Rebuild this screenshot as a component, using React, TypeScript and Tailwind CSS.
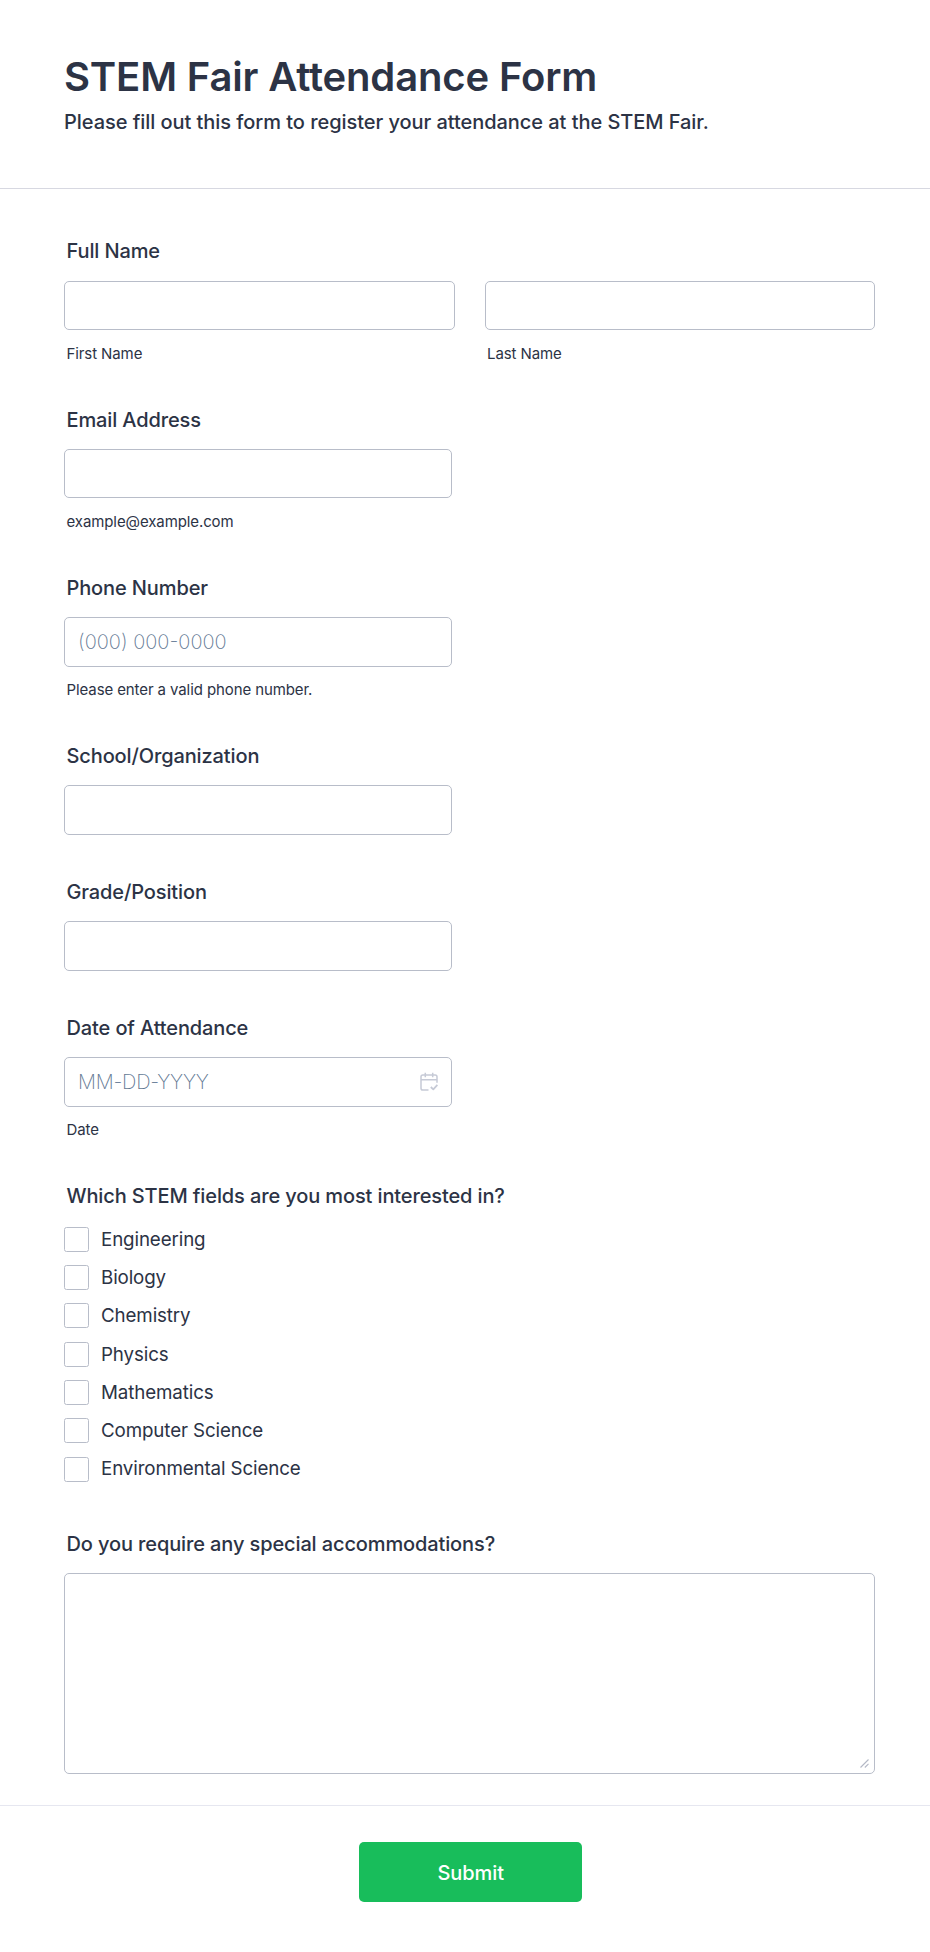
import type { ReactNode } from 'react';

const fields = [
  'Engineering',
  'Biology',
  'Chemistry',
  'Physics',
  'Mathematics',
  'Computer Science',
  'Environmental Science',
];

const inputClass =
  'block w-full h-[49.4px] rounded-[5px] border border-[#b8bdc9] bg-white px-[13px] text-[20px] font-extralight text-[#2c3345] placeholder:text-[#627893] outline-none';

interface FieldProps {
  label: string;
  className?: string;
  children: ReactNode;
}

function Field({ label, className = 'h-[168.2px]', children }: FieldProps) {
  return (
    <div className={className}>
      <div className="mb-[16.4px] pl-[2.5px] text-[20px] leading-[25px] font-medium tracking-[-0.12px]">
        {label}
      </div>
      {children}
    </div>
  );
}

interface TextInputProps {
  placeholder?: string;
  subLabel?: string;
  icon?: ReactNode;
  tracking?: string;
}

function TextInput({ placeholder, subLabel, icon, tracking = 'tracking-normal' }: TextInputProps) {
  return (
    <label className="block">
      <span className="relative block">
        <input type="text" placeholder={placeholder} className={`${inputClass} ${tracking}`} />
        {icon}
      </span>
      {subLabel && (
        <span className="mt-[13.6px] block pl-[2.5px] text-[15px] leading-5 tracking-[-0.1px]">{subLabel}</span>
      )}
    </label>
  );
}

function CalendarIcon() {
  return (
    <svg
      viewBox="0 0 18 19"
      className="absolute top-[15px] right-[14px] h-[19px] w-[18px]"
      fill="none"
      stroke="#c6cad6"
      strokeWidth="1.5"
      strokeLinejoin="round"
    >
      <path d="M8.5 18H2.8a1.8 1.8 0 0 1-1.8-1.8V4.8A1.8 1.8 0 0 1 2.8 3h12.4A1.8 1.8 0 0 1 17 4.8v6M1 7.8h16M5.3 0.8v4.4M12.7 0.8v4.4" />
      <path d="M10.8 15l2.5 2.3 4.1-4.4" strokeWidth="1.8" />
    </svg>
  );
}

export default function App() {
  return (
    <form className="h-[1952px] w-[930px] bg-white font-['Inter',sans-serif] text-[#2c3345]">
      <header className="h-[189px] border-b border-[#d7d8e1] px-16 pt-[52px]">
        <h1 className="text-[40px] leading-[50px] font-semibold tracking-[-0.15px]">STEM Fair Attendance Form</h1>
        <p className="mt-2 text-[20px] leading-[25px] font-medium tracking-[-0.05px]">
          Please fill out this form to register your attendance at the STEM Fair.
        </p>
      </header>

      <main className="h-[1615.5px] pt-[50.4px] pr-[55px] pl-16">
        <Field label="Full Name">
          <div className="grid grid-cols-2 gap-[30px]">
            <TextInput subLabel="First Name" />
            <TextInput subLabel="Last Name" />
          </div>
        </Field>
        <div className="w-[388px]">
          <Field label="Email Address">
            <TextInput subLabel="example@example.com" />
          </Field>
          <Field label="Phone Number">
            <TextInput placeholder="(000) 000-0000" subLabel="Please enter a valid phone number." />
          </Field>
          <Field label="School/Organization" className="h-[136px]">
            <TextInput />
          </Field>
          <Field label="Grade/Position" className="h-[136px]">
            <TextInput />
          </Field>
          <Field label="Date of Attendance">
            <TextInput
              placeholder="MM-DD-YYYY"
              subLabel="Date"
              icon={<CalendarIcon />}
              tracking="tracking-[-0.25px]"
            />
          </Field>
        </div>
        <Field label="Which STEM fields are you most interested in?" className="h-[347.8px]">
          <div className="flex flex-col gap-[13.3px] pt-[1.2px]">
            {fields.map((field) => (
              <label key={field} className="flex h-[25px] items-center gap-3 text-[18.75px] tracking-[-0.12px]">
                <input
                  type="checkbox"
                  className="size-[25px] appearance-none rounded-[2.5px] border border-[#b8bdc9] bg-white"
                />
                <span className="pt-px">{field}</span>
              </label>
            ))}
          </div>
        </Field>
        <Field label="Do you require any special accommodations?" className="h-[243px]">
          <div className="relative">
            <textarea className="block h-[201px] w-full resize-none rounded-[5px] border border-[#b8bdc9] bg-white p-3 outline-none" />
            <svg
              viewBox="0 0 9 9"
              className="absolute right-[6px] bottom-[6px] size-[9px]"
              stroke="#b4b8c6"
              strokeWidth="1.1"
            >
              <path d="M0.5 8.5l8-8M4.8 8.5l3.7-3.7" />
            </svg>
          </div>
        </Field>
      </main>

      <footer className="flex justify-center border-t border-[#e6e7f0] pt-[36.5px] pl-[11.5px]">
        <button
          type="button"
          className="h-[60px] w-[223px] rounded-[5px] bg-[#18bd5b] pt-px text-[20px] font-medium tracking-[-0.05px] text-white"
        >
          Submit
        </button>
      </footer>
    </form>
  );
}
